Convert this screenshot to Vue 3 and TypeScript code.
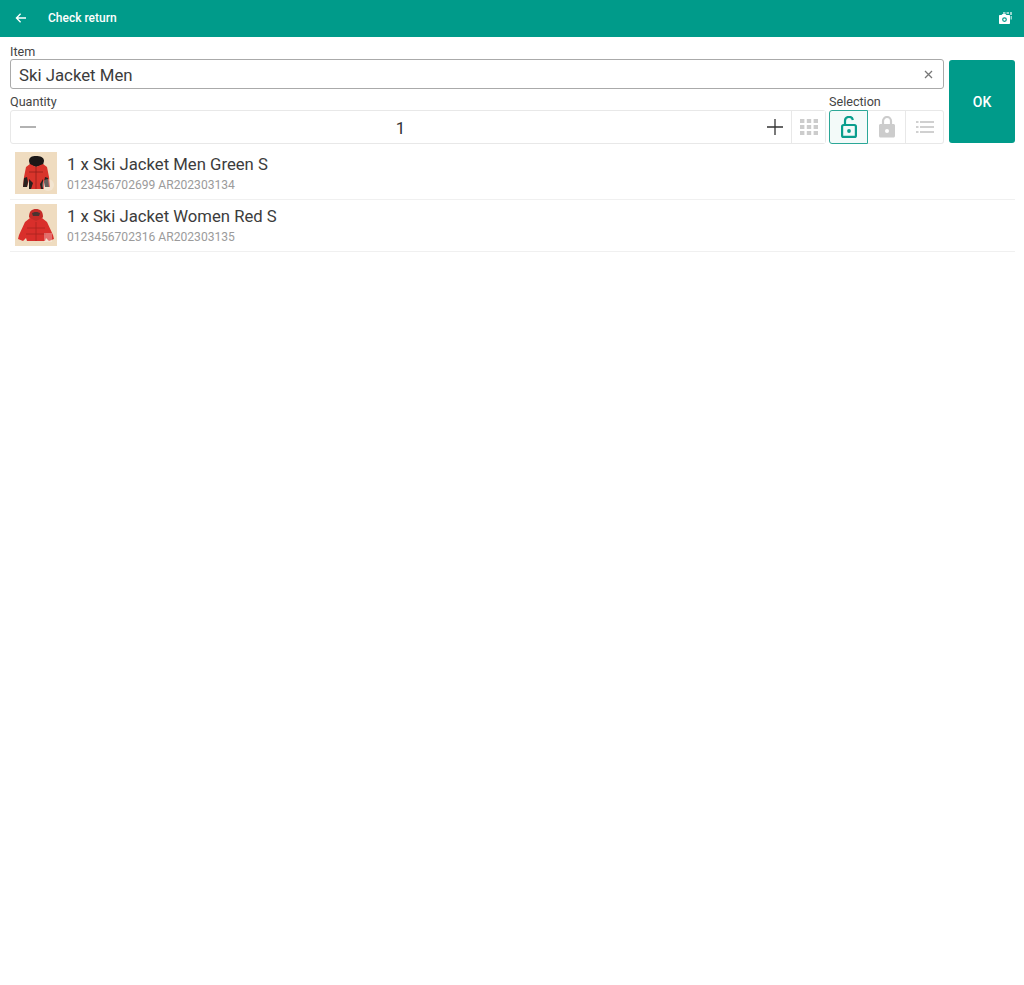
<script setup lang="ts">
import { ref } from 'vue'

interface Item {
  id: number
  title: string
  sub: string
  hood: boolean
}

const search = ref('Ski Jacket Men')
const quantity = ref(1)

const items: Item[] = [
  { id: 1, title: '1 x Ski Jacket Men Green S', sub: '0123456702699 AR202303134', hood: false },
  { id: 2, title: '1 x Ski Jacket Women Red S', sub: '0123456702316 AR202303135', hood: true }
]
</script>

<template>
  <div class="page">
    <header class="topbar">
      <svg class="back" width="12" height="12" viewBox="0 0 12 12">
        <path d="M11 6H1.800M5.600 1.800 1.400 6l4.200 4.200" fill="none" stroke="#fff" stroke-width="1.300" />
      </svg>
      <span class="title">Check return</span>
      <svg class="camera" width="14" height="14" viewBox="0 0 14 14">
        <path d="M5 1h2.500v2H5zM8.500 1H11v2H8.500zM12 1h2v3h-2zM12.500 5H14v3.500h-1.500z" fill="#fff" opacity=".6" />
        <path fill-rule="evenodd" fill="#fff" d="M2 4h1.500l1-1h3l1 1H11c.6 0 1 .4 1 1v7c0 .6-.4 1-1 1H2c-.6 0-1-.4-1-1V5c0-.6.4-1 1-1zm4.500 2.200a2.400 2.400 0 1 0 0 4.800 2.400 2.400 0 0 0 0-4.800zm0 1.200a1.200 1.200 0 1 1 0 2.400 1.200 1.200 0 0 1 0-2.400z" />
      </svg>
    </header>

    <main class="content">
      <div class="form">
        <div class="fields">
          <label class="lbl">Item</label>
          <div class="search">
            <span class="search-text">{{ search }}</span>
            <svg width="9" height="9" viewBox="0 0 9 9">
              <path d="M1 1l7 7M8 1 1 8" stroke="#777" stroke-width="1.300" fill="none" />
            </svg>
          </div>
          <div class="row-labels">
            <label class="lbl">Quantity</label>
            <label class="lbl sel-lbl">Selection</label>
          </div>
          <div class="controls">
            <div class="stepper">
              <svg class="minus" width="16" height="2" viewBox="0 0 16 2"><path d="M0 1h16" stroke="#888" stroke-width="1.300" /></svg>
              <span class="qty">{{ quantity }}</span>
              <svg class="plus" width="16" height="16" viewBox="0 0 16 16"><path d="M8 0v16M0 8h16" stroke="#333" stroke-width="1.300" /></svg>
              <button class="tool grid-btn">
                <svg width="18" height="16" viewBox="0 0 18 16" fill="#ccc">
                  <rect x="0" y="0" width="4.400" height="4" /><rect x="6.800" y="0" width="4.400" height="4" /><rect x="13.600" y="0" width="4.400" height="4" />
                  <rect x="0" y="6" width="4.400" height="4" /><rect x="6.800" y="6" width="4.400" height="4" /><rect x="13.600" y="6" width="4.400" height="4" />
                  <rect x="0" y="12" width="4.400" height="4" /><rect x="6.800" y="12" width="4.400" height="4" /><rect x="13.600" y="12" width="4.400" height="4" />
                </svg>
              </button>
            </div>
            <div class="selection">
              <button class="tool sel active">
                <svg width="16" height="22" viewBox="0 0 16 22" fill="none">
                  <path d="M4 9V5a4 4 0 0 1 7.900-1" stroke="#0a9e8d" stroke-width="2.200" />
                  <rect x="1.100" y="9" width="13.800" height="11.900" rx="1.500" stroke="#0a9e8d" stroke-width="2.200" />
                  <circle cx="8" cy="15" r="1.900" fill="#0a9e8d" />
                </svg>
              </button>
              <button class="tool sel">
                <svg width="16" height="22" viewBox="0 0 16 22">
                  <path d="M4 9V5a4 4 0 0 1 8 0v4" stroke="#ccc" stroke-width="2.200" fill="none" />
                  <path fill-rule="evenodd" fill="#ccc" d="M1.500 8h13c.8 0 1.500.7 1.500 1.500v10.500c0 .8-.7 1.500-1.500 1.500h-13C.7 21.500 0 20.800 0 20V9.500C0 8.700.7 8 1.500 8zM8 13a2 2 0 1 0 0 4 2 2 0 0 0 0-4z" />
                </svg>
              </button>
              <button class="tool sel">
                <svg width="18" height="14" viewBox="0 0 18 14" fill="#d0d0d0">
                  <rect x="0" y="1" width="2.500" height="2" /><rect x="4" y="1" width="14" height="2" />
                  <rect x="0" y="6" width="2.500" height="2" /><rect x="4" y="6" width="14" height="2" />
                  <rect x="0" y="11" width="2.500" height="2" /><rect x="4" y="11" width="14" height="2" />
                </svg>
              </button>
            </div>
          </div>
        </div>
        <button class="ok">OK</button>
      </div>

      <ul class="list">
        <li v-for="item in items" :key="item.id" class="row">
          <div class="thumb">
            <!-- product photos redrawn as small shapes -->
            <svg v-if="!item.hood" width="42" height="42" viewBox="0 0 42 42">
              <path d="M14 9c0-4 3-5 7-5s8 1 8 5l-1 4-7 2-6-2z" fill="#1b1716" />
              <path d="M15 12l-4 3-2 10-1 10h4l2-7v9h15v-9l2 7h4l-1-10-2-10-4-3-7 3z" fill="#d9342b" />
              <path d="M8 35l1-9 3-1 1 5-1 5zM34 35l-1-9-3-1-1 5 1 5zM14 27l4 4-2 6h-2zM28 27l-3 5 1 5h2z" fill="#2a211e" />
              <path d="M14 20h14M21 15v22" stroke="#8f1f1b" stroke-width=".8" />
              <circle cx="33" cy="33" r="6" fill="#fff" opacity=".28" />
            </svg>
            <svg v-else width="42" height="42" viewBox="0 0 42 42">
              <path d="M14 13c0-6 3-8 7-8s7 2 7 8l-3 4H17z" fill="#c42c28" />
              <path d="M17 9.500c1-2 7-2 8 0l-1 2.500h-6z" fill="#4a3431" />
              <path d="M15 14l-5 4-6 13-1 4 5 2 3-3 1 3h18l1-3 3 3 5-2-1-4-6-13-5-4-6 3z" fill="#d92f2b" />
              <path d="M12 24h18M11 30h20M21 18v19" stroke="#a82420" stroke-width=".8" />
              <rect x="29" y="29" width="8" height="9" fill="#fff" opacity=".3" />
            </svg>
          </div>
          <div class="info">
            <div class="item-title">{{ item.title }}</div>
            <div class="item-sub">{{ item.sub }}</div>
          </div>
        </li>
      </ul>
    </main>
  </div>
</template>

<style>
html, body {
  margin: 0;
  background: #fff;
}
</style>

<style scoped>
.page {
  min-height: 985px;
  background: #fff;
  font-family: Roboto, "Liberation Sans", sans-serif;
  color: #3c3c3c;
}

.topbar {
  height: 37px;
  background: #009b8a;
  color: #fff;
  display: flex;
  align-items: center;
  padding: 0 12px 2px 15px;
  box-sizing: border-box;
}
.back { flex-shrink: 0; }
.title {
  margin-left: 21px;
  font-size: 12px;
  font-weight: 500;
  flex: 1;
}
.camera { margin-bottom: -1px; }

.content { padding: 0 9px 0 10px; }

.form {
  display: flex;
  gap: 5px;
  align-items: flex-end;
}
.fields {
  width: 934px;
  padding-top: 7px;
}
.lbl {
  display: block;
  font-size: 12.600px;
  line-height: 15px;
  color: #444;
}

.search {
  height: 30px;
  box-sizing: border-box;
  border: 1px solid #aaa;
  border-radius: 3px;
  display: flex;
  align-items: center;
  justify-content: space-between;
  padding: 0 10px 0 8px;
}
.search-text {
  font-size: 16.800px;
  line-height: 30px;
  padding-top: 1px;
  color: #3c3c3c;
}

.row-labels {
  display: flex;
  justify-content: space-between;
  height: 15px;
  margin-top: 5px;
  padding-bottom: 1px;
}
.sel-lbl { width: 115px; }

.controls {
  display: flex;
  gap: 3px;
  height: 34px;
}
.stepper {
  flex: 1;
  display: flex;
  align-items: center;
  box-sizing: border-box;
  border: 1px solid #e8e8e8;
  border-radius: 3px;
  padding-left: 9px;
}
.minus { flex-shrink: 0; }
.qty {
  flex: 1;
  text-align: center;
  font-size: 17px;
  line-height: 34px;
  padding-top: 1px;
  color: #333;
  margin-right: 2px;
}
.plus {
  flex-shrink: 0;
  margin-right: 8px;
}
.tool {
  display: flex;
  align-items: center;
  justify-content: center;
  background: #fff;
  border: none;
  padding: 0;
  cursor: pointer;
}
.grid-btn {
  width: 34px;
  height: 32px;
  border-left: 1px solid #e8e8e8;
}
.selection {
  display: flex;
  width: 115px;
  box-sizing: border-box;
}
.sel {
  flex: 1;
  box-sizing: border-box;
  border: 1px solid #e8e8e8;
  border-left: none;
  background: #fff;
}
.sel:last-child { border-radius: 0 3px 3px 0; }
.sel.active {
  border: 1px solid #2ba797;
  border-radius: 3px 0 0 3px;
  background: #f3faf9;
}

.ok {
  width: 66px;
  height: 83px;
  margin-bottom: 1px;
  background: #009b8a;
  border: none;
  border-radius: 3px;
  color: #fff;
  font-family: inherit;
  font-size: 14px;
  font-weight: 500;
  cursor: pointer;
}

.list {
  list-style: none;
  margin: 4px 0 0;
  padding: 0;
}
.row {
  display: flex;
  align-items: flex-start;
  height: 52px;
  box-sizing: border-box;
  border-bottom: 1px solid #f0f0f0;
  padding: 4px 0 0 5px;
}
.thumb {
  width: 42px;
  height: 42px;
  background: #efdcc0;
  flex-shrink: 0;
}
.thumb svg {
  display: block;
  filter: blur(0.4px);
}
.info {
  margin-left: 10px;
}
.item-title {
  font-size: 16.700px;
  line-height: 24px;
  margin-top: 1px;
  color: #3c3c3c;
}
.item-sub {
  font-size: 12.100px;
  line-height: 16px;
  color: #9b9b9b;
}
</style>
